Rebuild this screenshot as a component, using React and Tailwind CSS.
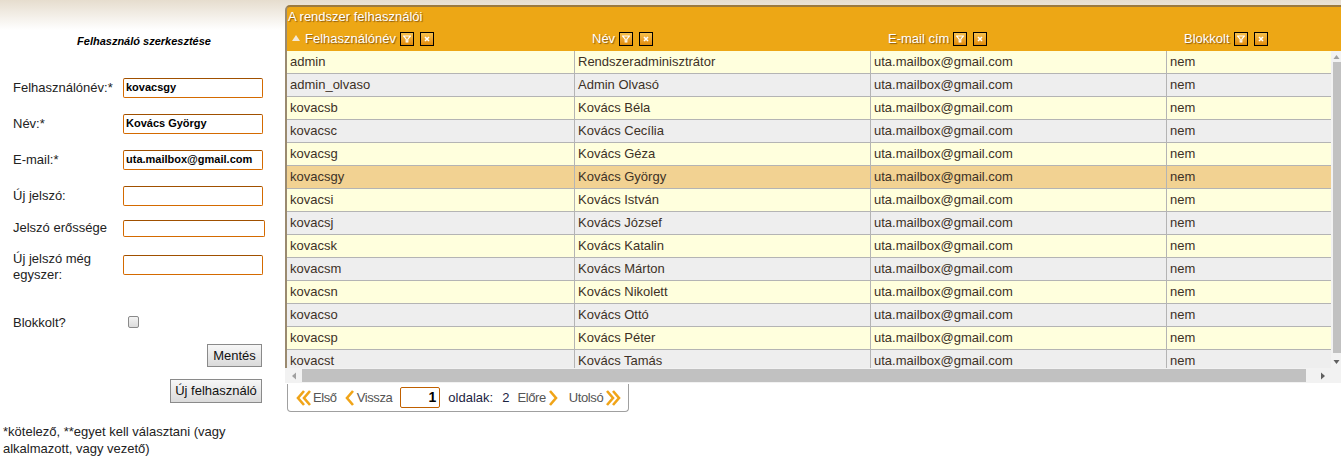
import React from "react";

const rows = [
  ["admin", "Rendszeradminisztrátor"],
  ["admin_olvaso", "Admin Olvasó"],
  ["kovacsb", "Kovács Béla"],
  ["kovacsc", "Kovács Cecília"],
  ["kovacsg", "Kovács Géza"],
  ["kovacsgy", "Kovács György"],
  ["kovacsi", "Kovács István"],
  ["kovacsj", "Kovács József"],
  ["kovacsk", "Kovács Katalin"],
  ["kovacsm", "Kovács Márton"],
  ["kovacsn", "Kovács Nikolett"],
  ["kovacso", "Kovács Ottó"],
  ["kovacsp", "Kovács Péter"],
  ["kovacst", "Kovács Tamás"],
];

const font = { fontFamily: '"Liberation Sans", Arial, sans-serif' };

function FilterBtn() {
  return (
    <span className="inline-flex h-[14px] w-[14px] items-center justify-center border border-black bg-gradient-to-b from-[#f7c04a] to-[#e08a00]">
      <svg width="8" height="8" viewBox="0 0 8 8">
        <path d="M0.5 1 H7.5 L4.8 4.2 V7 H3.2 V4.2 Z" fill="none" stroke="#fff" strokeWidth="1.2" />
      </svg>
    </span>
  );
}

function ClearBtn() {
  return (
    <span className="inline-flex h-[14px] w-[14px] items-center justify-center border border-black bg-gradient-to-b from-[#f7c04a] to-[#e08a00]">
      <svg width="6" height="6" viewBox="0 0 6 6">
        <path d="M1 1 L5 5 M5 1 L1 5" stroke="#fff" strokeWidth="1.6" />
      </svg>
    </span>
  );
}

function HeadCell({ label, sort }) {
  return (
    <div className="flex items-center" style={{ paddingLeft: sort ? 4 : 17 }}>
      {sort && (
        <svg width="10" height="8" viewBox="0 0 10 8" className="mr-[4px] mt-[-2px]">
          <path d="M1 7 L5 1 L9 7 Z" fill="#f3e9d6" />
        </svg>
      )}
      <span className="text-[13px] text-white [text-shadow:1px_1px_1px_#8a5a10]">{label}</span>
      <span className="ml-[4px] flex"><FilterBtn /></span>
      <span className="ml-[6px] flex"><ClearBtn /></span>
    </div>
  );
}

function Chev({ dir = "left", double }) {
  const d = dir === "left" ? "M8 1 L2 8 L8 15" : "M2 1 L8 8 L2 15";
  const d2 = dir === "left" ? "M14 1 L8 8 L14 15" : "M8 1 L14 8 L8 15";
  return (
    <svg width={double ? 16 : 10} height="16" viewBox={double ? "0 0 16 16" : "0 0 10 16"}>
      <path d={d} fill="none" stroke="#f0a418" strokeWidth="2.6" />
      {double && <path d={d2} fill="none" stroke="#f0a418" strokeWidth="2.6" />}
    </svg>
  );
}

function Field({ label, value, wide }) {
  return (
    <div className="flex items-center pl-[13px]">
      <div className="w-[110px] text-[13px] leading-[16px] text-[#222]">{label}</div>
      <div
        className={`flex ${wide ? "h-[17px] w-[142px]" : "h-[20px] w-[140px]"} items-center rounded-[2px] border border-[#d46a00] border-t-[#a05000] bg-white px-[2px] text-[11px] font-bold text-black`}
      >
        {value}
      </div>
    </div>
  );
}

const narrow = { fontFamily: '"Liberation Sans Narrow", "Arial Narrow", "Liberation Sans", sans-serif' };

export default function App() {
  return (
    <div
      className="flex h-[461px] w-[1341px] overflow-hidden bg-[linear-gradient(#e6ddce,#ffffff_30px)] text-[#333]"
      style={font}
    >
      {/* Left panel */}
      <div className="flex w-[285px] shrink-0 flex-col">
        <div className="pt-[33px] pl-[3px] text-center text-[11px] font-bold italic text-black">
          Felhasználó szerkesztése
        </div>
        <div className="mt-[28px] flex flex-col">
          <Field label="Felhasználónév:*" value="kovacsgy" />
          <div className="h-[16px]" />
          <Field label="Név:*" value="Kovács György" />
          <div className="h-[16px]" />
          <Field label="E-mail:*" value="uta.mailbox@gmail.com" />
          <div className="h-[16px]" />
          <Field label="Új jelszó:" value="" />
          <div className="h-[14px]" />
          <Field label="Jelszó erőssége" value="" wide />
          <div className="h-[13px]" />
          <div className="flex items-start pl-[13px]">
            <div className="w-[110px] pt-[1px] text-[13px] leading-[16px] text-[#222]">
              Új jelszó még<br />egyszer:
            </div>
            <div className="mt-[5px] h-[20px] w-[140px] rounded-[2px] border border-[#d46a00] border-t-[#a05000] bg-white" />
          </div>
          <div className="mt-[30px] flex items-center pl-[13px]">
            <div className="w-[115px] text-[13px] text-[#222]">Blokkolt?</div>
            <div className="h-[12px] w-[11px] rounded-[2px] border border-[#8a8a8a] bg-gradient-to-b from-[#f4f4f4] to-[#dcdcdc]" />
          </div>
          <div className="mt-[12px] flex justify-end pr-[23px]">
            <button className="h-[23px] w-[55px] border border-[#8a8a8a] bg-gradient-to-b from-[#f7f7f7] to-[#dadada] text-[13px] text-[#111]">
              Mentés
            </button>
          </div>
          <div className="mt-[12px] flex justify-end pr-[23px]">
            <button className="h-[24px] w-[92px] border border-[#8a8a8a] bg-gradient-to-b from-[#f7f7f7] to-[#dadada] text-[13px] text-[#111]">
              Új felhasználó
            </button>
          </div>
          <div className="mt-[20px] pl-[3px] text-[13px] leading-[17px] text-[#222]">
            *kötelező, **egyet kell választani (vagy<br />alkalmazott, vagy vezető)
          </div>
        </div>
      </div>

      {/* Right panel */}
      <div className="flex flex-1 flex-col pt-[5px]">
        <div className="flex flex-col rounded-tl-[5px] border-t-2 border-l-2 border-t-[#9b7a40] border-l-[#9a8a70] bg-[#eda715]">
          <div className="h-[21px] pl-[1px] pt-[2px] text-[13px] leading-[16px] text-white [text-shadow:1px_1px_1px_#8a5a10]">
            A rendszer felhasználói
          </div>
          <div className="grid h-[23px] grid-cols-[288px_296px_296px_164px] items-center pb-[2px]">
            <HeadCell label="Felhasználónév" sort />
            <HeadCell label="Név" />
            <HeadCell label="E-mail cím" />
            <HeadCell label="Blokkolt" />
          </div>
        </div>
        <div className="flex border-l-2 border-l-[#9a8a70]">
          <div className="h-[317px] overflow-hidden">
            {rows.map(([u, n], i) => {
              const sel = u === "kovacsgy";
              const bg = sel ? "bg-[#f2d292]" : i % 2 === 0 ? "bg-[#ffffdd]" : "bg-[#eeeeee]";
              return (
                <div
                  key={u}
                  className={`grid h-[23px] grid-cols-[288px_296px_296px_164px] border-b border-[#b4b4b4] text-[13px] leading-[22px] text-[#3d3126] ${bg}`}
                >
                  <div className="border-r border-[#b4b4b4] pl-[3px]">{u}</div>
                  <div className="border-r border-[#b4b4b4] pl-[3px]">{n}</div>
                  <div className="border-r border-[#b4b4b4] pl-[3px]">uta.mailbox@gmail.com</div>
                  <div className="pl-[3px]">nem</div>
                </div>
              );
            })}
          </div>
          <div className="flex h-[317px] w-[10px] flex-col items-center bg-[#f2f2f2]">
            <svg width="7" height="8" viewBox="0 0 7 8" className="mt-[2px]">
              <path d="M0.5 6 L3.5 2 L6.5 6 Z" fill="#a0a0a0" />
            </svg>
            <div className="mt-[1px] ml-[2px] w-[8px] flex-1 bg-[#c1c1c1]" />
            <svg width="7" height="8" viewBox="0 0 7 8" className="mb-[2px] mt-[5px]">
              <path d="M0.5 2 L3.5 6 L6.5 2 Z" fill="#606060" />
            </svg>
          </div>
        </div>
        <div className="flex h-[15px] items-center bg-[#f2f2f2] pl-[2px]">
          <svg width="8" height="8" viewBox="0 0 8 8" className="ml-[3px]">
            <path d="M6 0.5 L2 4 L6 7.5 Z" fill="#a0a0a0" />
          </svg>
          <div className="ml-[4px] h-[13px] w-[1004px] bg-[#c1c1c1]" />
          <svg width="8" height="8" viewBox="0 0 8 8" className="ml-[13px]">
            <path d="M2 0.5 L6 4 L2 7.5 Z" fill="#606060" />
          </svg>
        </div>
        <div className="ml-[2px] mt-[1px] flex h-[28px] w-[342px] items-center rounded-b-[4px] border border-t-0 border-[#a0a0a0] bg-white pl-[8px] text-[13px]">
          <Chev dir="left" double />
          <span className="ml-[1px] tracking-[-0.4px] text-[#555]" style={narrow}>Első</span>
          <span className="ml-[8px] flex"><Chev dir="left" /></span>
          <span className="ml-[2px] tracking-[-0.4px] text-[#555]" style={narrow}>Vissza</span>
          <div className="ml-[8px] flex h-[21px] w-[40px] items-center justify-end rounded-[2px] border border-[#c06000] bg-white pr-[3px] text-[14px] font-bold text-black">
            1
          </div>
          <span className="ml-[8px] text-[#1c2442]">oldalak:</span>
          <span className="ml-[9px] text-[#1c2442]">2</span>
          <span className="ml-[8px] tracking-[-0.4px] text-[#555]" style={narrow}>Előre</span>
          <span className="ml-[2px] flex"><Chev dir="right" /></span>
          <span className="ml-[11px] tracking-[-0.4px] text-[#555]" style={narrow}>Utolsó</span>
          <span className="ml-[2px] flex"><Chev dir="right" double /></span>
        </div>
      </div>
    </div>
  );
}
